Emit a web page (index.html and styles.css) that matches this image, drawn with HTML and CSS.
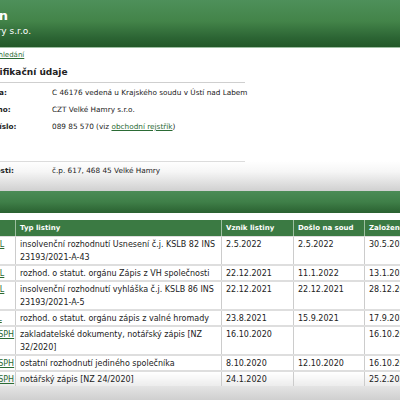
FILE: index.html
```html
<!DOCTYPE html>
<html lang="cs">
<head>
<meta charset="utf-8">
<title>Sbírka listin</title>
<link rel="stylesheet" href="styles.css">
</head>
<body>
<div class="page">
  <header class="header">
    <div class="title">Sbírka listin</div>
    <div class="subtitle">CZT Velké Hamry s.r.o.</div>
  </header>
  <main class="content">
    <a class="back" href="#">Nové vyhledání</a>
    <h2 class="heading">Identifikační údaje</h2>
    <div class="info">
      <div class="label">Spisová značka:</div><div class="value">C 46176 vedená u Krajského soudu v Ústí nad Labem</div>
      <div class="label">Obchodní jméno:</div><div class="value">CZT Velké Hamry s.r.o.</div>
      <div class="label">Identifikační číslo:</div><div class="value">089 85 570 (viz <a href="#">obchodní rejstřík</a>)</div>
      <div class="spacer"></div><div class="spacer"></div>
    </div>
  </main>
  <div class="fade">
    <div class="info info-sep">
      <div class="label">Sídlo společnosti:</div><div class="value">č.p. 617, 468 45 Velké Hamry</div>
    </div>
  </div>
  <div class="bar"></div>
  <table class="docs">
    <thead>
      <tr><th class="c1">Číslo listiny</th><th class="c2">Typ listiny</th><th class="c3">Vznik listiny</th><th class="c4">Došlo na soud</th><th class="c5">Založeno</th></tr>
    </thead>
    <tbody>
      <tr><td class="c1"><a href="#">C 46176/SL12/KSUL</a></td><td>insolvenční rozhodnutí Usnesení č.j. KSLB 82 INS 23193/2021-A-43</td><td>2.5.2022</td><td>2.5.2022</td><td>30.5.2022</td></tr>
      <tr><td class="c1"><a href="#">C 46176/SL11/KSUL</a></td><td>rozhod. o statut. orgánu Zápis z VH společnosti</td><td>22.12.2021</td><td>11.1.2022</td><td>13.1.2022</td></tr>
      <tr><td class="c1"><a href="#">C 46176/SL10/KSUL</a></td><td>insolvenční rozhodnutí vyhláška č.j. KSLB 86 INS 23193/2021-A-5</td><td>22.12.2021</td><td>22.12.2021</td><td>28.12.2021</td></tr>
      <tr><td class="c1"><a href="#">C 46176/SL 9/KSUL</a></td><td>rozhod. o statut. orgánu zápis z valné hromady</td><td>23.8.2021</td><td>15.9.2021</td><td>17.9.2021</td></tr>
      <tr><td class="c1"><a href="#">C 334795/SL 13/MSPH</a></td><td>zakladatelské dokumenty, notářský zápis [NZ 32/2020]</td><td>16.10.2020</td><td></td><td>16.10.2020</td></tr>
      <tr><td class="c1"><a href="#">C 334795/SL 12/MSPH</a></td><td>ostatní rozhodnutí jediného společníka</td><td>8.10.2020</td><td>12.10.2020</td><td>16.10.2020</td></tr>
      <tr class="last"><td class="c1"><a href="#">C 334795/SL 11/MSPH</a></td><td>notářský zápis [NZ 24/2020]</td><td>24.1.2020</td><td></td><td>25.2.2020</td></tr>
    </tbody>
  </table>
  <div class="footer"></div>
</div>
</body>
</html>
```
FILE: styles.css
```css
html, body {
  margin: 0;
  padding: 0;
  overflow: hidden;
  background: #fff;
}
body {
  font-family: "DejaVu Sans", Verdana, sans-serif;
  color: #222;
}
.page {
  margin-left: -90px;
  width: 560px;
}
.header {
  height: 48px;
  box-sizing: border-box;
  padding: 8px 0 0 10px;
  background: linear-gradient(#4e905a 0%, #438449 45%, #2c6534 80%, #235828 100%);
  border-bottom: 1px solid #9dbfa1;
  color: #fff;
}
.title {
  font-weight: bold;
  font-size: 13px;
  line-height: 15px;
}
.subtitle {
  font-size: 9px;
  line-height: 12px;
  margin-top: 2px;
  margin-left: 9px;
}
.content {
  padding-top: 2px;
}
a {
  color: #2b6b35;
}
.back {
  display: block;
  width: max-content;
  margin-left: 60px;
  font-size: 7px;
  line-height: 10px;
}
.heading {
  margin: 6px 0 0 0;
  padding: 0 0 4px 63px;
  width: 272px;
  font-size: 9px;
  line-height: 12px;
  font-weight: bold;
  border-bottom: 1px solid #cfcfcf;
}
.info {
  display: grid;
  grid-template-columns: 111px 200px;
  width: 335px;
  padding-left: 31px;
  padding-top: 1px;
  box-sizing: border-box;
  font-size: 7.3px;
  line-height: 11px;
}
.label, .value {
  padding: 3px 0;
  white-space: nowrap;
}
.label {
  font-weight: bold;
}
.spacer {
  height: 26px;
}
.fade {
  height: 30px;
  background: linear-gradient(#ffffff 0%, #f6f6f6 35%, #d0d0d0 100%);
}
.info-sep {
  border-top: 1px solid #dcdcdc;
  padding-top: 0;
}
.bar {
  height: 22px;
  background: linear-gradient(#4b8c56, #3f7f48 50%, #2a6131);
}
.docs {
  margin-top: 7px;
  border-collapse: collapse;
  font-size: 8px;
  line-height: 13px;
  table-layout: fixed;
  width: 560px;
}
.docs th {
  background: #3b7a43;
  color: #fff;
  text-align: left;
  font-weight: bold;
  font-size: 7px;
  white-space: nowrap;
  padding: 2px 4px 1px 4px;
  border-left: 1px solid #9cbfa0;
  border-bottom: 1px solid #dcdcdc;
}
.docs td {
  vertical-align: top;
  padding: 1px 4px 0 4px;
  border-left: 1px solid #cccccc;
  border-bottom: 2px solid #dedede;
}
.docs .c1 {
  width: 88px;
  padding-left: 15px;
  padding-right: 2px;
  border-left: none;
  white-space: nowrap;
  overflow: hidden;
}
.docs .c2 { width: 189px; padding-right: 12px; }
.docs .c3 { width: 63px; }
.docs .c4 { width: 62px; }
.docs .c5 { width: 110px; }
.docs tr.last td {
  background: linear-gradient(#ffffff, #ececec);
  border-bottom: none;
}
.footer {
  height: 14px;
  background: linear-gradient(#e4e4e4, #cfcfcf);
}
```
